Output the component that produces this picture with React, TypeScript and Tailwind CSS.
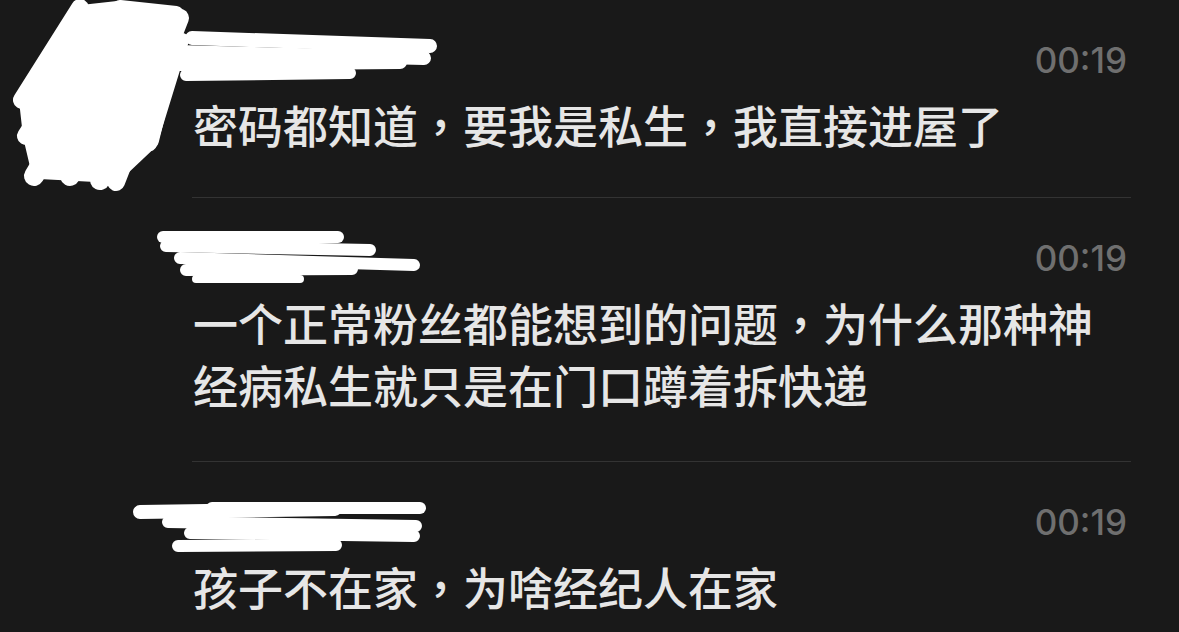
import React from "react";

type Comment = {
  id: number;
  time: string;
  lines: string[];
  bottom: string;
};

const COMMENTS: Comment[] = [
  {
    id: 1,
    time: "00:19",
    lines: ["密码都知道，要我是私生，我直接进屋了"],
    bottom: "pb-[41px] border-b",
  },
  {
    id: 2,
    time: "00:19",
    lines: ["一个正常粉丝都能想到的问题，为什么那种神", "经病私生就只是在门口蹲着拆快递"],
    bottom: "pb-[45px] border-b",
  },
  {
    id: 3,
    time: "00:19",
    lines: ["孩子不在家，为啥经纪人在家"],
    bottom: "pb-[40px]",
  },
];

// marker strokes drawn over avatars / nicknames
const STROKES: { d: string; w: number }[] = [
  // avatar blot, first comment
  { d: "M22 100 L80 8", w: 18 },
  { d: "M26 136 L100 20", w: 18 },
  { d: "M34 176 L120 30", w: 20 },
  { d: "M70 176 L140 50", w: 20 },
  { d: "M100 180 L160 60", w: 20 },
  { d: "M116 182 L180 18", w: 18 },
  { d: "M150 144 L182 40", w: 14 },
  { d: "M120 8 L176 14", w: 16 },
  // nickname, first comment
  { d: "M192 38 L430 46", w: 14 },
  { d: "M176 52 L424 58", w: 14 },
  { d: "M180 64 L400 62", w: 14 },
  { d: "M186 75 L350 73", w: 12 },
  // nickname, second comment
  { d: "M163 237 L338 237", w: 12 },
  { d: "M166 246 L370 250", w: 12 },
  { d: "M180 258 L414 265", w: 12 },
  { d: "M186 270 L352 269", w: 12 },
  { d: "M196 279 L300 279", w: 8 },
  // nickname, third comment
  { d: "M140 512 L335 509", w: 14 },
  { d: "M212 508 L420 508", w: 12 },
  { d: "M168 522 L416 526", w: 12 },
  { d: "M190 533 L414 536", w: 12 },
  { d: "M178 546 L336 545", w: 12 },
];

function Scribbles() {
  return (
    <svg
      className="pointer-events-none absolute left-0 top-0"
      width={1179}
      height={632}
      viewBox="0 0 1179 632"
    >
      <g fill="none" stroke="#ffffff" strokeLinecap="round" strokeLinejoin="round">
        <path
          d="M28 100 L82 14 L118 10 L172 18 L174 42 L150 140 L114 174 L40 170 L32 136 Z"
          fill="#ffffff"
          strokeWidth={18}
        />
        {STROKES.map((s, i) => (
          <path key={i} d={s.d} strokeWidth={s.w} />
        ))}
      </g>
    </svg>
  );
}

// fullwidth commas sit centred in their cell
function Line({ text }: { text: string }) {
  const parts = text.split("，");
  return (
    <div className="whitespace-nowrap">
      {parts.map((p, i) => (
        <React.Fragment key={i}>
          {p}
          {i < parts.length - 1 && (
            <span className="font-['Noto_Sans_CJK_TC',sans-serif]">，</span>
          )}
        </React.Fragment>
      ))}
    </div>
  );
}

export default function App() {
  return (
    <div className="relative h-[632px] w-[1179px] overflow-hidden bg-[#191919]">
      <div className="pl-[192px] pr-[48px]">
        {COMMENTS.map((c) => (
          <div key={c.id} className={`border-[#333333] pt-[30px] ${c.bottom}`}>
            <div className="flex h-[60px] items-center justify-end pr-[4px]">
              <span className="font-['Inter','Liberation_Sans',sans-serif] text-[35px] font-medium text-[#6f6f6f]">
                {c.time}
              </span>
            </div>
            <div className="mt-[4px] pl-px font-['Noto_Sans_CJK_SC',sans-serif] text-[45px] font-medium leading-[62px] text-[#e6e6e6]">
              {c.lines.map((line) => (
                <Line key={line} text={line} />
              ))}
            </div>
          </div>
        ))}
      </div>
      <Scribbles />
    </div>
  );
}
